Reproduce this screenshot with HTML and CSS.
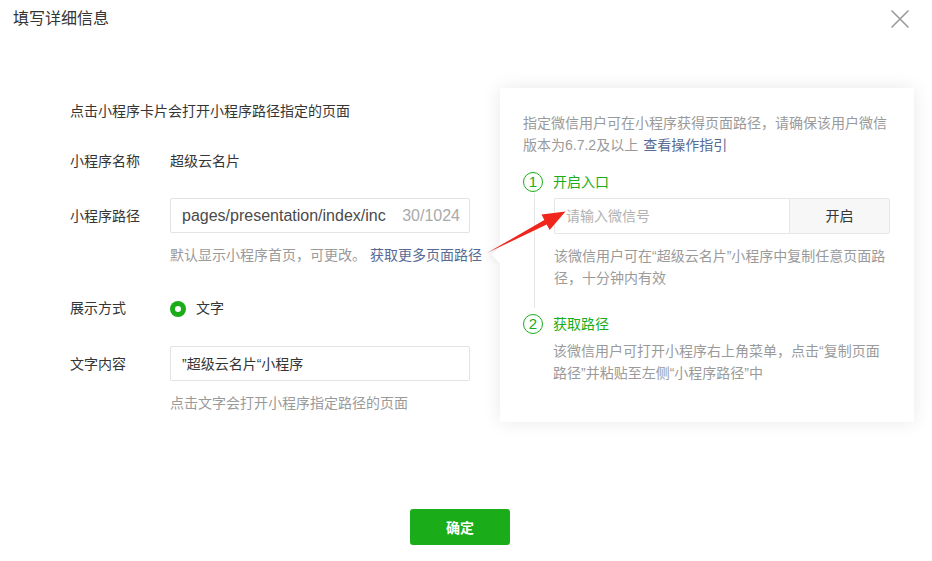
FILE: index.html
```html
<!DOCTYPE html>
<html lang="zh-CN">
<head>
<meta charset="utf-8">
<title>填写详细信息</title>
<link rel="stylesheet" href="styles.css">
</head>
<body>
<div class="dialog">
  <div class="header">
    <span class="title">填写详细信息</span>
    <span class="close" aria-label="关闭">
      <svg width="20" height="20" viewBox="0 0 20 20"><path d="M1.5 1.5 L18.5 18.5 M18.5 1.5 L1.5 18.5" stroke="#9a9a9a" stroke-width="1.6" fill="none"/></svg>
    </span>
  </div>
  <div class="body">
    <p class="intro">点击小程序卡片会打开小程序路径指定的页面</p>
    <div class="row row-name">
      <span class="label">小程序名称</span>
      <span class="value">超级云名片</span>
    </div>
    <div class="row row-path">
      <span class="label">小程序路径</span>
      <div class="input">
        <span class="input-text input-latin">pages/presentation/index/inc</span>
        <span class="counter">30/1024</span>
      </div>
    </div>
    <p class="hint">默认显示小程序首页，可更改。 <a class="link">获取更多页面路径</a></p>
    <div class="row row-mode">
      <span class="label">展示方式</span>
      <span class="radio"><span class="radio-dot"></span><span class="radio-text">文字</span></span>
    </div>
    <div class="row row-text">
      <span class="label">文字内容</span>
      <div class="input">
        <span class="input-text">”超级云名片“小程序</span>
      </div>
    </div>
    <p class="hint">点击文字会打开小程序指定路径的页面</p>
  </div>
  <div class="footer">
    <button class="btn-primary">确定</button>
  </div>

  <div class="popover">
    <p class="pop-desc">指定微信用户可在小程序获得页面路径，请确保该用户微信版本为6.7.2及以上<a class="link link-ib">查看操作指引</a></p>
    <div class="step-head">
      <span class="step-num">1</span>
      <span class="step-title">开启入口</span>
    </div>
    <div class="step-body step-body-line">
      <div class="input-group">
        <span class="ig-input">请输入微信号</span>
        <span class="ig-btn">开启</span>
      </div>
      <p class="step-desc">该微信用户可在“超级云名片”小程序中复制任意页面路径，十分钟内有效</p>
    </div>
    <div class="step-head step-head-2">
      <span class="step-num">2</span>
      <span class="step-title">获取路径</span>
    </div>
    <div class="step-body">
      <p class="step-desc step-desc-2">该微信用户可打开小程序右上角菜单，点击“复制页面路径”并粘贴至左侧“小程序路径”中</p>
    </div>
  </div>

  <svg class="red-arrow" width="90" height="56" viewBox="480 205 90 56">
    <polygon points="487,253 546.7,224.5 549.6,230 565.5,211.5 541.5,214.5 544.3,220.1" fill="#f0261d"/>
  </svg>
</div>
</body>
</html>
```

FILE: styles.css
```css
* { box-sizing: border-box; }
html, body { margin: 0; padding: 0; background: #fff; }
body {
  font-family: "Liberation Sans", "Noto Sans CJK SC", sans-serif;
  font-size: 14px;
  color: #353535;
}
p { margin: 0; }
.dialog {
  position: relative;
  width: 932px;
  height: 561px;
  display: flex;
  flex-direction: column;
}
.header {
  height: 38px;
  display: flex;
  align-items: center;
  justify-content: space-between;
  padding: 0 22px 0 13px;
}
.title { font-size: 16px; color: #353535; line-height: 38px; }
.close { display: flex; width: 20px; height: 20px; }
.body {
  padding: 63px 0 0 70px;
  line-height: 20px;
}
.intro { height: 20px; }
.row { display: flex; align-items: center; }
.label { width: 100px; flex: none; }
.row-name { margin-top: 30px; }
.row-path { margin-top: 27px; }
.row-mode { margin-top: 33px; }
.row-text { margin-top: 28px; }
.input {
  width: 300px;
  height: 35px;
  border: 1px solid #e3e3e3;
  border-radius: 2px;
  display: flex;
  align-items: center;
  padding: 0 9px 0 11px;
  overflow: hidden;
}
.input-text { flex: 1; white-space: nowrap; overflow: hidden; color: #353535; }
.input-latin { font-size: 16px; color: #4a4a4a; }
.counter { color: #aaaaaa; margin-left: 14px; font-size: 16px; }
.hint { margin: 12px 0 0 100px; color: #9a9a9a; }
.link { color: #576b95; text-decoration: none; }
.link-ib { display: inline-block; margin-left: 5px; }
.radio { display: flex; align-items: center; }
.radio-dot {
  width: 16px; height: 16px; border-radius: 50%;
  background: #1aad19;
  display: flex; align-items: center; justify-content: center;
  margin-top: 2px;
}
.radio-dot::after {
  content: ""; width: 6px; height: 6px; border-radius: 50%; background: #fff;
}
.radio-text { margin-left: 10px; }
.footer {
  margin-top: auto;
  padding: 0 12px 16px 0;
  display: flex;
  justify-content: center;
}
.btn-primary {
  width: 100px; height: 36px;
  border: 0; border-radius: 3px;
  background: #1aad19;
  color: #fff;
  font-family: inherit;
  font-size: 14px;
  font-weight: bold;
}
.popover {
  position: absolute;
  left: 500px; top: 88px;
  width: 414px; height: 334px;
  background: #fff;
  box-shadow: 0 0 18px rgba(0,0,0,0.09);
  padding: 24px 24px 0 23px;
  line-height: 22px;
  color: #9a9a9a;
}
.popover::before {
  content: "";
  position: absolute;
  left: -6px; top: 161px;
  width: 12px; height: 12px;
  background: #fff;
  transform: rotate(45deg);
  box-shadow: -3px 3px 6px rgba(0,0,0,0.05);
}
.step-head {
  display: flex; align-items: center;
  margin-top: 16px;
  height: 20px;
}
.step-head-2 { margin-top: 6px; }
.step-num {
  width: 20px; height: 20px; border-radius: 50%;
  border: 1px solid #1aad19;
  color: #1aad19;
  font-size: 15px;
  line-height: 18px;
  text-align: center;
  flex: none;
}
.step-title { margin-left: 10px; color: #1aad19; }
.step-body {
  margin-left: 11px;
  padding-left: 19px;
}
.step-body-line {
  border-left: 1px solid #e6e6e6;
  margin-top: 1px;
  padding-top: 5px;
  padding-bottom: 19px;
}
.input-group {
  display: flex;
  height: 36px;
  border: 1px solid #e6e6e6;
  border-radius: 2px;
}
.ig-input {
  flex: 1;
  padding-left: 11px;
  display: flex; align-items: center;
  color: #b2b2b2;
}
.ig-btn {
  width: 100px;
  border-left: 1px solid #e6e6e6;
  background: #f7f7f7;
  color: #353535;
  display: flex; align-items: center; justify-content: center;
}
.step-desc { margin-top: 11px; }
.step-desc-2 { margin-top: 6px; }
.red-arrow { position: absolute; left: 480px; top: 205px; }
```
